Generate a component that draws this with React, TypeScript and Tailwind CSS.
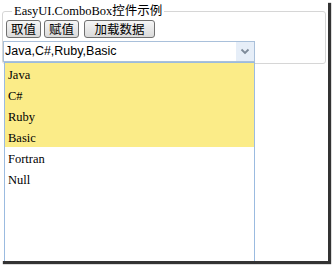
import React from "react";

const items = ["Java", "C#", "Ruby", "Basic", "Fortran", "Null"];
const selected = new Set(["Java", "C#", "Ruby", "Basic"]);

function Btn({ label, w, cls }: { label: string; w: string; cls: string }) {
  return (
    <button
      className={`${w} ${cls} h-[18px] rounded-[3px] border border-[#707070] bg-gradient-to-b from-[#f6f6f6] to-[#dadada] text-[12.5px] leading-[16px] text-black flex items-center justify-center`}
      style={{ fontFamily: '"Noto Sans CJK SC", sans-serif' }}
    >
      {label}
    </button>
  );
}

export default function App() {
  return (
    <div className="w-[332px] h-[266px] bg-white">
      <div className="relative w-[328px] h-[261px] bg-white overflow-hidden shadow-[3px_3px_1px_rgba(0,0,0,0.8)]">
        <fieldset className="box-border mt-[4px] ml-[2px] w-[324px] h-[60px] border border-[#d6d6d6] rounded-[3px] p-0">
          <legend
            className="ml-[9px] px-[2px] text-[12.5px] leading-[14px] text-black"
            style={{ fontFamily: '"Liberation Serif", "Noto Sans CJK SC", serif' }}
          >
            EasyUI.ComboBox控件示例
          </legend>
          <div className="flex mt-[2px]">
            <Btn label="取值" w="w-[35px]" cls="ml-[3px]" />
            <Btn label="赋值" w="w-[35px]" cls="ml-[3px]" />
            <Btn label="加载数据" w="w-[71px]" cls="ml-[5px]" />
          </div>
          <div className="mt-[3px] w-[252px] h-[21px] border border-[#a9c0da] flex items-stretch bg-white">
            <div
              className="flex-1 pl-[1px] text-[12.5px] leading-[19px] text-black"
              style={{ fontFamily: '"Liberation Sans", Arial, sans-serif' }}
            >
              Java,C#,Ruby,Basic
            </div>
            <div className="w-[18px] bg-[#e6eef8] flex items-center justify-center">
              <svg width="10" height="7" viewBox="0 0 10 7">
                <path d="M1.5 1.5 L5 5 L8.5 1.5" fill="none" stroke="#7d8a99" strokeWidth="1.8" />
              </svg>
            </div>
          </div>
        </fieldset>
        <div className="absolute left-[4px] top-[62px] w-[251px] h-[210px] border border-[#9bbbe0] bg-white">
          {items.map((it) => (
            <div
              key={it}
              className={`h-[21px] pl-[3px] pt-[4px] text-[12.5px] leading-[16px] text-black ${
                selected.has(it) ? "bg-[#fbec88]" : "bg-white"
              }`}
              style={{ fontFamily: '"Liberation Serif", serif' }}
            >
              {it}
            </div>
          ))}
        </div>
      </div>
    </div>
  );
}
